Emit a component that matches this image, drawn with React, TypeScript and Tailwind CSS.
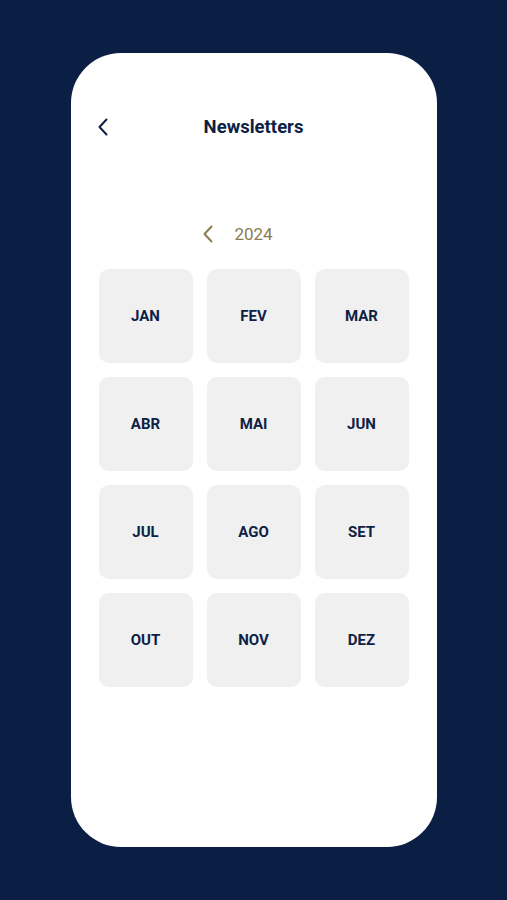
import React from 'react'

const months = ['JAN', 'FEV', 'MAR', 'ABR', 'MAI', 'JUN', 'JUL', 'AGO', 'SET', 'OUT', 'NOV', 'DEZ']

const Chevron = ({ className }: { className?: string }) => (
  <svg width="12" height="18" viewBox="0 0 12 18" fill="none" className={className}>
    <polyline points="9.5,1.5 2.5,9 9.5,16.5" stroke="currentColor" strokeWidth="2" strokeLinecap="round" strokeLinejoin="round" />
  </svg>
)

export default function App() {
  return (
    <div
      className="w-full h-[900px] bg-[#0b1f45] flex justify-center pt-[53px]"
      style={{ fontFamily: 'Roboto, "Noto Sans", sans-serif' }}
    >
      <div className="w-[366px] h-[794px] bg-white rounded-[50px] flex flex-col px-[28px] pt-[62px]">
        <div className="relative h-[24px] flex items-center justify-center">
          <button className="absolute left-[-2px] top-[3px] text-[#0d2145]">
            <Chevron />
          </button>
          <h1 className="text-[18.5px] font-bold text-[#0d2145] leading-none">Newsletters</h1>
        </div>

        <div className="mt-[83px] h-[24px] flex items-center justify-center gap-[20px]">
          <Chevron className="text-[#8b7c52]" />
          <span className="text-[17px] text-[#8b7c52] leading-none">2024</span>
          {/* next year disabled */}
          <Chevron className="invisible rotate-180" />
        </div>

        <div className="mt-[23px] grid grid-cols-3 gap-[14px]">
          {months.map((m) => (
            <div
              key={m}
              className="h-[94px] rounded-[10px] bg-[#f0f0f1] flex items-center justify-center text-[15px] font-bold text-[#0d2145]"
            >
              {m}
            </div>
          ))}
        </div>
      </div>
    </div>
  )
}
